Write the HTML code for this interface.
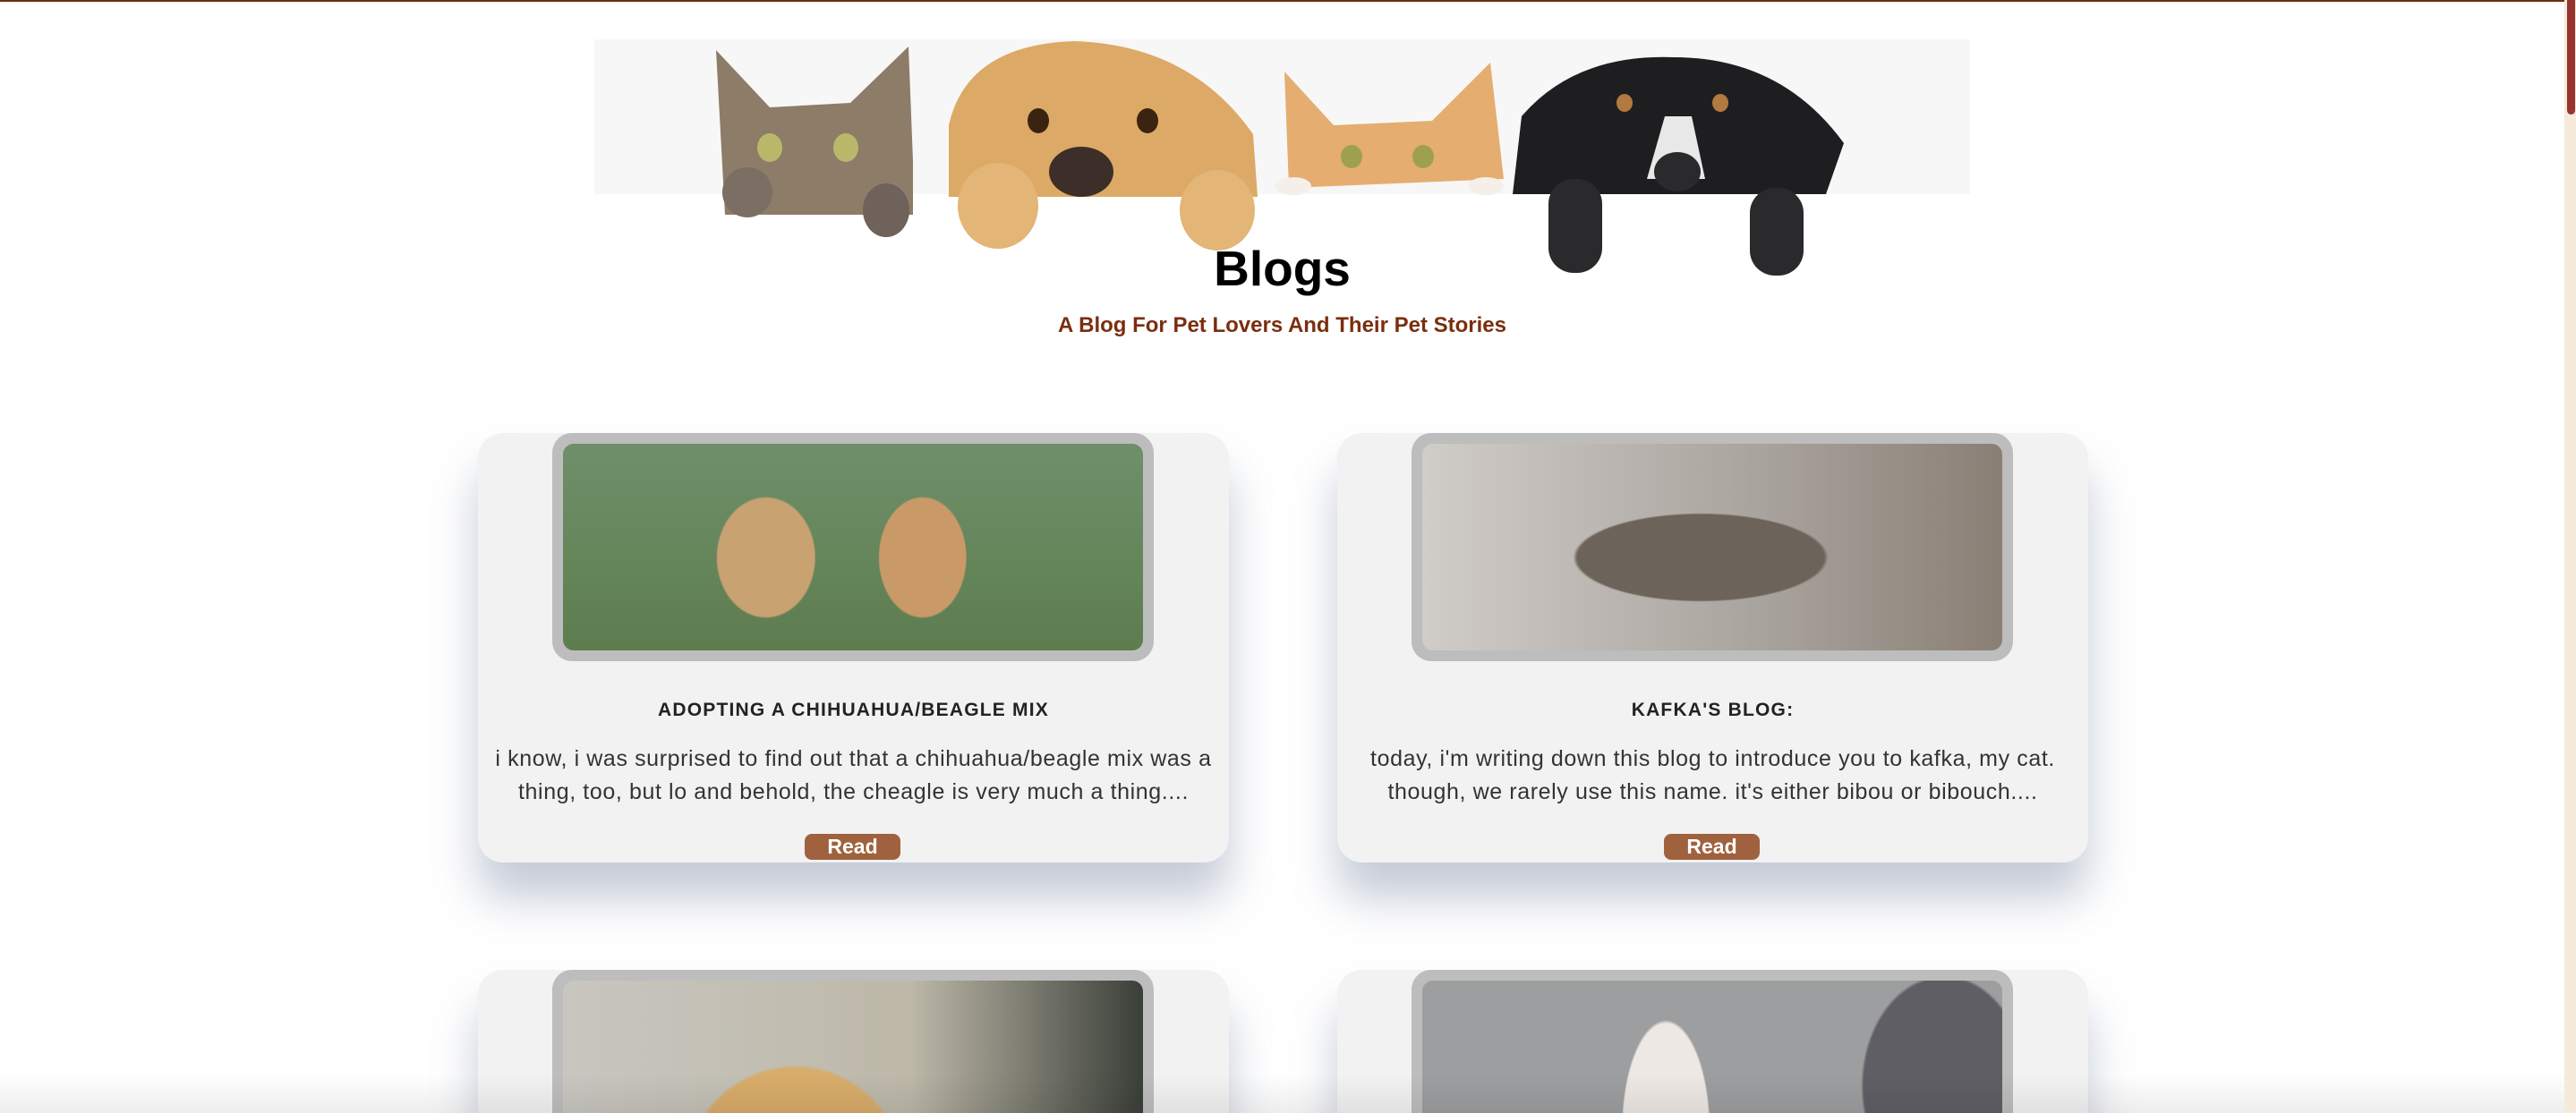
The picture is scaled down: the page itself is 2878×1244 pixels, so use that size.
<!DOCTYPE html>
<html><head><meta charset="utf-8"><style>
*{margin:0;padding:0;box-sizing:border-box}
html,body{width:2878px;height:1244px;overflow:hidden;background:#fff;font-family:"Liberation Sans",sans-serif}
#wrap{position:relative;width:2878px;height:1244px;overflow:hidden}
.top{position:absolute;left:0;top:0;width:2865px;height:2px;background:#6b2f10}
.sb{position:absolute;left:2865px;top:0;width:13px;height:1244px;background:#f6eada}
.th{position:absolute;left:2868px;top:0;width:9px;height:128px;background:#963530;border-radius:0 0 5px 5px}
.banner{position:absolute;left:664px;top:44px;width:1537px;height:173px;background:#f7f7f7}
h1{position:absolute;left:0;width:2865px;top:268px;text-align:center;font-size:55px;font-weight:bold;color:#000}
.sub{position:absolute;left:0;width:2865px;top:350px;text-align:center;font-size:24px;font-weight:bold;color:#7a2e0e}
.card{position:absolute;width:839px;height:480px;background:#f2f2f3;border-radius:28px;box-shadow:0 40px 50px rgba(90,105,140,.35)}
.frame{position:absolute;left:83px;top:0;width:672px;height:255px;background:#bdbdbd;border-radius:22px;padding:12px}
.img{width:100%;height:100%;border-radius:12px;overflow:hidden}
.t{position:absolute;left:0;width:100%;top:298px;text-align:center;font-size:21px;font-weight:bold;letter-spacing:1.2px;color:#222}
.p{position:absolute;left:14px;right:14px;top:346px;text-align:center;font-size:25px;line-height:37px;color:#333;letter-spacing:0.6px}
.btn{position:absolute;left:365px;top:448px;width:107px;height:29px;background:#a0623e;border-radius:8px;color:#fff;font-weight:bold;font-size:23px;text-align:center;line-height:29px}
.fade{position:absolute;left:0;top:1200px;width:2865px;height:44px;background:linear-gradient(rgba(0,0,0,0),rgba(0,0,0,.07))}
</style></head><body><div id="wrap">
<div class="top"></div>
<div class="banner"></div>
<svg style="position:absolute;left:0;top:0" width="2865" height="320">
<path d="M800 56 L860 120 L950 115 L1015 52 L1020 180 L1020 240 L810 240 Z" fill="#8d7c68"/>
<ellipse cx="860" cy="165" rx="14" ry="16" fill="#b9b86a"/><ellipse cx="945" cy="165" rx="14" ry="16" fill="#b9b86a"/>
<ellipse cx="835" cy="215" rx="28" ry="28" fill="#7b6e62"/><ellipse cx="990" cy="235" rx="26" ry="30" fill="#6e625a"/>
<path d="M1060 140 Q1080 50 1200 46 Q1330 50 1400 150 L1405 220 L1060 220 Z" fill="#dcaa66"/>
<ellipse cx="1160" cy="135" rx="12" ry="14" fill="#3a2410"/><ellipse cx="1282" cy="135" rx="12" ry="14" fill="#3a2410"/>
<ellipse cx="1208" cy="192" rx="36" ry="28" fill="#3c2e28"/>
<ellipse cx="1115" cy="230" rx="45" ry="48" fill="#e3b576"/><ellipse cx="1360" cy="235" rx="42" ry="45" fill="#e3b576"/>
<path d="M1435 80 L1490 140 L1600 135 L1665 70 L1680 200 L1440 210 Z" fill="#e5ad70"/>
<ellipse cx="1510" cy="175" rx="12" ry="13" fill="#9ea050"/><ellipse cx="1590" cy="175" rx="12" ry="13" fill="#9ea050"/>
<ellipse cx="1445" cy="208" rx="20" ry="10" fill="#f4efe8"/><ellipse cx="1660" cy="208" rx="20" ry="10" fill="#f4efe8"/>
<path d="M1700 130 Q1760 60 1870 64 Q1990 64 2060 160 L2040 217 L1690 217 Z" fill="#1e1e20"/>
<path d="M1860 130 L1890 130 L1905 200 L1840 200 Z" fill="#e8e8e8"/>
<ellipse cx="1874" cy="192" rx="26" ry="22" fill="#2a2a2c"/>
<ellipse cx="1815" cy="115" rx="9" ry="10" fill="#b27a40"/><ellipse cx="1922" cy="115" rx="9" ry="10" fill="#b27a40"/>
<rect x="1730" y="200" width="60" height="105" rx="28" fill="#2a2a2c"/><rect x="1955" y="210" width="60" height="98" rx="28" fill="#2a2a2c"/>
</svg>
<h1>Blogs</h1>
<div class="sub">A Blog For Pet Lovers And Their Pet Stories</div>

<div class="card" style="left:534px;top:484px">
 <div class="frame"><div class="img" style="background:radial-gradient(ellipse 90px 110px at 35% 55%,#c9a272 60%,transparent 62%),radial-gradient(ellipse 80px 110px at 62% 55%,#c99a68 60%,transparent 62%),linear-gradient(#6f8f6a,#5d7d4f)"></div></div>
 <div class="t">ADOPTING A CHIHUAHUA/BEAGLE MIX</div>
 <div class="p">i know, i was surprised to find out that a chihuahua/beagle mix was a thing, too, but lo and behold, the cheagle is very much a thing....</div>
 <div class="btn">Read</div>
</div>
<div class="card" style="left:1494px;top:484px">
 <div class="frame"><div class="img" style="background:radial-gradient(ellipse 230px 80px at 48% 55%,#6c645a 60%,transparent 62%),linear-gradient(90deg,#d0ccc8,#a8a29c 60%,#8a7f75)"></div></div>
 <div class="t">KAFKA'S BLOG:</div>
 <div class="p">today, i'm writing down this blog to introduce you to kafka, my cat.<br>though, we rarely use this name. it's either bibou or bibouch....</div>
 <div class="btn">Read</div>
</div>
<div class="card" style="left:534px;top:1084px;height:160px;border-radius:28px 28px 0 0">
 <div class="frame" style="height:180px;border-radius:22px 22px 0 0;padding-bottom:0"><div class="img" style="border-radius:12px 12px 0 0;background:radial-gradient(ellipse 200px 200px at 40% 130%,#d8ac6a 60%,transparent 62%),linear-gradient(90deg,#c8c6c0,#bdb8a8 60%,#3a3f38)"></div></div>
</div>
<div class="card" style="left:1494px;top:1084px;height:160px;border-radius:28px 28px 0 0">
 <div class="frame" style="height:180px;border-radius:22px 22px 0 0;padding-bottom:0"><div class="img" style="border-radius:12px 12px 0 0;background:radial-gradient(ellipse 80px 200px at 42% 100%,#eee8e4 60%,transparent 62%),radial-gradient(ellipse 150px 200px at 90% 70%,#5e5e64 60%,transparent 62%),#9c9ea0"></div></div>
</div>
<div class="fade"></div>
<div class="sb"></div><div class="th"></div>
</div></body></html>
